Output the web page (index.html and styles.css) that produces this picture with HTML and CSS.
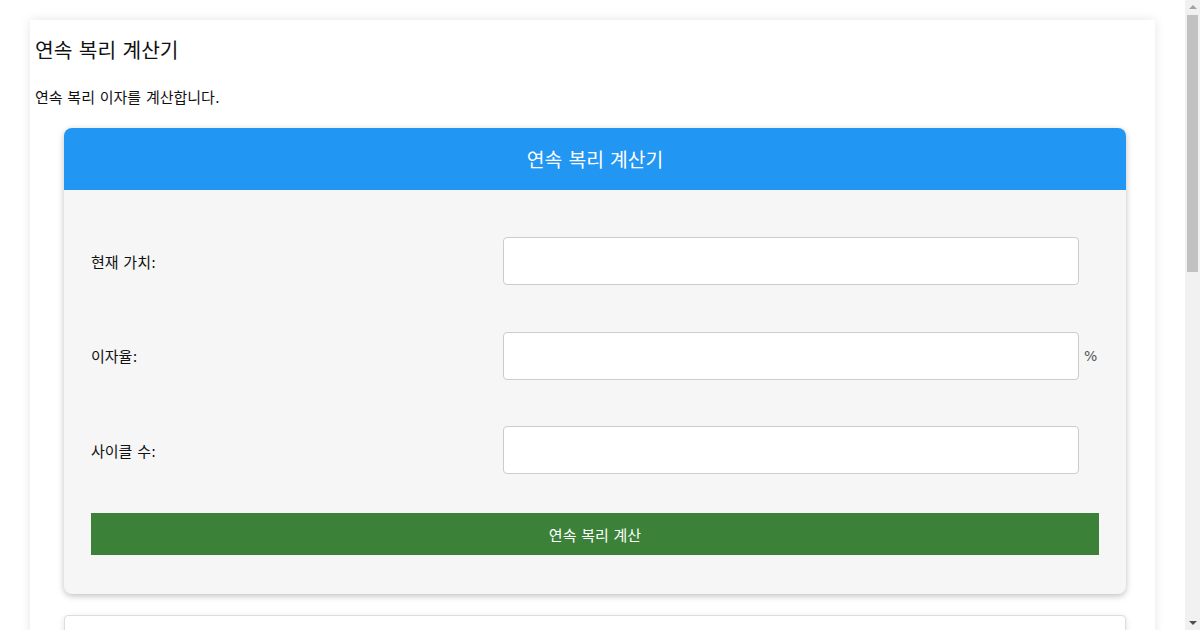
FILE: index.html
```html
<!DOCTYPE html>
<html lang="ko">
<head>
<meta charset="utf-8">
<title>연속 복리 계산기</title>
<link rel="stylesheet" href="styles.css">
</head>
<body>
<div class="page">
  <h2 class="page-title">연속 복리 계산기</h2>
  <p class="page-desc">연속 복리 이자를 계산합니다.</p>

  <div class="calc-card">
    <div class="calc-header">연속 복리 계산기</div>
    <div class="calc-body">
      <div class="field-row">
        <label class="field-label">현재 가치:</label>
        <input class="field-input" type="text">
      </div>
      <div class="field-row">
        <label class="field-label">이자율:</label>
        <input class="field-input" type="text">
        <span class="field-unit">%</span>
      </div>
      <div class="field-row">
        <label class="field-label">사이클 수:</label>
        <input class="field-input" type="text">
      </div>
      <button class="calc-button" type="button">연속 복리 계산</button>
    </div>
  </div>

  <div class="result-card"></div>
</div>

<div class="scrollbar" aria-hidden="true">
  <div class="scroll-arrow scroll-up"></div>
  <div class="scroll-thumb"></div>
  <div class="scroll-arrow scroll-down"></div>
</div>
</body>
</html>
```

FILE: styles.css
```css
html, body {
  margin: 0;
  padding: 0;
  background: #ffffff;
}

body {
  font-family: "DejaVu Sans", "Noto Sans CJK KR", sans-serif;
  color: #111111;
}

.page {
  margin: 20px 45px 20px 30px;
  padding: 18px 5px 20px 5px;
  background: #ffffff;
  box-shadow: 0 0 10px rgba(0, 0, 0, 0.1);
}

.page-title {
  margin: 0;
  font-size: 20.3px;
  font-weight: 400;
  line-height: 26px;
  height: 26px;
}

.page-desc {
  margin: 22px 0 0 0;
  font-size: 15px;
  line-height: 24px;
  height: 24px;
}

.calc-card {
  width: 1062px;
  margin: 18px 0 0 29px;
  border-radius: 8px;
  box-shadow: 0 2px 6px rgba(0, 0, 0, 0.25);
  background: #f6f6f6;
}

.calc-header {
  height: 62px;
  display: flex;
  align-items: center;
  justify-content: center;
  background: #2196f3;
  color: #ffffff;
  font-size: 19.3px;
  border-radius: 8px 8px 0 0;
}

.calc-body {
  padding: 47px 27px 39px 27px;
  display: flex;
  flex-direction: column;
}

.field-row {
  display: flex;
  align-items: center;
  height: 48px;
  margin-bottom: 46.5px;
}

.field-row:last-of-type {
  margin-bottom: 39px;
}

.field-label {
  width: 412px;
  font-size: 15px;
  color: #111111;
}

.field-input {
  box-sizing: border-box;
  width: 576px;
  height: 48px;
  margin: 0;
  border: 1px solid #cccccc;
  border-radius: 4px;
  background: #ffffff;
  font-size: 16px;
  padding: 0 10px;
}

.field-unit {
  margin-left: 5px;
  font-size: 14px;
  color: #555555;
}

.calc-button {
  height: 42px;
  width: 100%;
  border: none;
  background: #3b8238;
  color: #ffffff;
  font-family: inherit;
  font-size: 15px;
  cursor: pointer;
}

.result-card {
  width: 1062px;
  height: 780px;
  margin: 21px 0 0 29px;
  box-sizing: border-box;
  border: 1px solid #dddddd;
  border-radius: 4px;
  background: #ffffff;
  box-shadow: 0 2px 6px rgba(0, 0, 0, 0.12);
}

.scrollbar {
  position: fixed;
  top: 0;
  right: 0;
  width: 15px;
  height: 100vh;
  background: #f1f1f1;
  display: flex;
  flex-direction: column;
  align-items: center;
}

.scroll-arrow {
  width: 0;
  height: 0;
  border-left: 4px solid transparent;
  border-right: 4px solid transparent;
}

.scroll-up {
  margin-top: 5px;
  border-bottom: 4px solid #a3a3a3;
}

.scroll-down {
  margin-top: auto;
  margin-bottom: 5px;
  border-top: 4px solid #505050;
}

.scroll-thumb {
  width: 11px;
  height: 257px;
  margin-top: 6px;
  background: #c1c1c1;
}
```
